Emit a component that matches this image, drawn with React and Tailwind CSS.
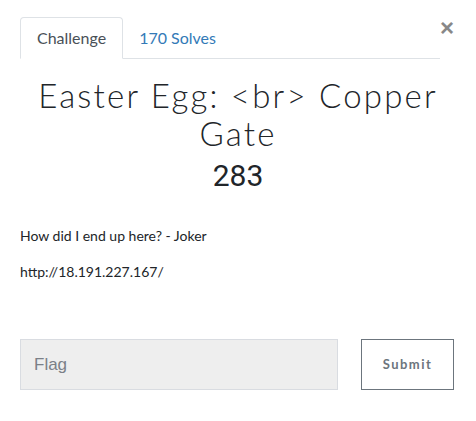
export default function App() {
  return (
    <div className="w-[476px] h-[421px] bg-white relative" style={{ fontFamily: "Lato, 'Liberation Sans', sans-serif" }}>
      <div className="px-5 pt-[18px]">
        <div className="flex items-end w-[420px] border-b border-[#dee2e6] h-[41px]">
          <div className="h-[42px] -mb-px px-4 flex items-center border border-[#dee2e6] border-b-white rounded-t-[4px] bg-white text-[16px] text-[#495057]">
            Challenge
          </div>
          <div className="h-[41px] px-4 flex items-center text-[16px] text-[#337ab7]">
            170 Solves
          </div>
        </div>
        <button className="absolute left-[440px] top-[18px] text-[#888] text-[24px] leading-[20px] font-bold" style={{ fontFamily: "'Liberation Sans', sans-serif" }}>
          ×
        </button>
        <h3 className="mt-[17px] text-center text-[33px] leading-[38px] font-light tracking-[2.2px] text-[#212529]">
          Easter Egg: &lt;br&gt; Copper Gate
        </h3>
        <div className="text-center text-[30px] leading-[40px] text-[#212529] mt-[4px]" style={{ fontFamily: "Roboto, sans-serif" }}>
          283
        </div>
        <div className="mt-[29px] text-[14px] text-[#212529] leading-[21px]">
          <p>How did I end up here? - Joker</p>
          <p className="mt-[15px]">http://18.191.227.167/</p>
        </div>
        <div className="mt-[57px] flex items-start">
          <div className="w-[318px] h-[51px] bg-[#eeeeee] border border-[#d9dce1] flex items-center px-[13px] text-[17px] text-[#7b8087]" style={{ fontFamily: "'Liberation Sans', sans-serif" }}>
            Flag
          </div>
          <button className="ml-[23px] w-[93px] h-[51px] border border-[#6c757d] text-[13px] font-bold tracking-[1.5px] text-[#6c757d] flex items-center justify-center">
            Submit
          </button>
        </div>
      </div>
    </div>
  );
}
